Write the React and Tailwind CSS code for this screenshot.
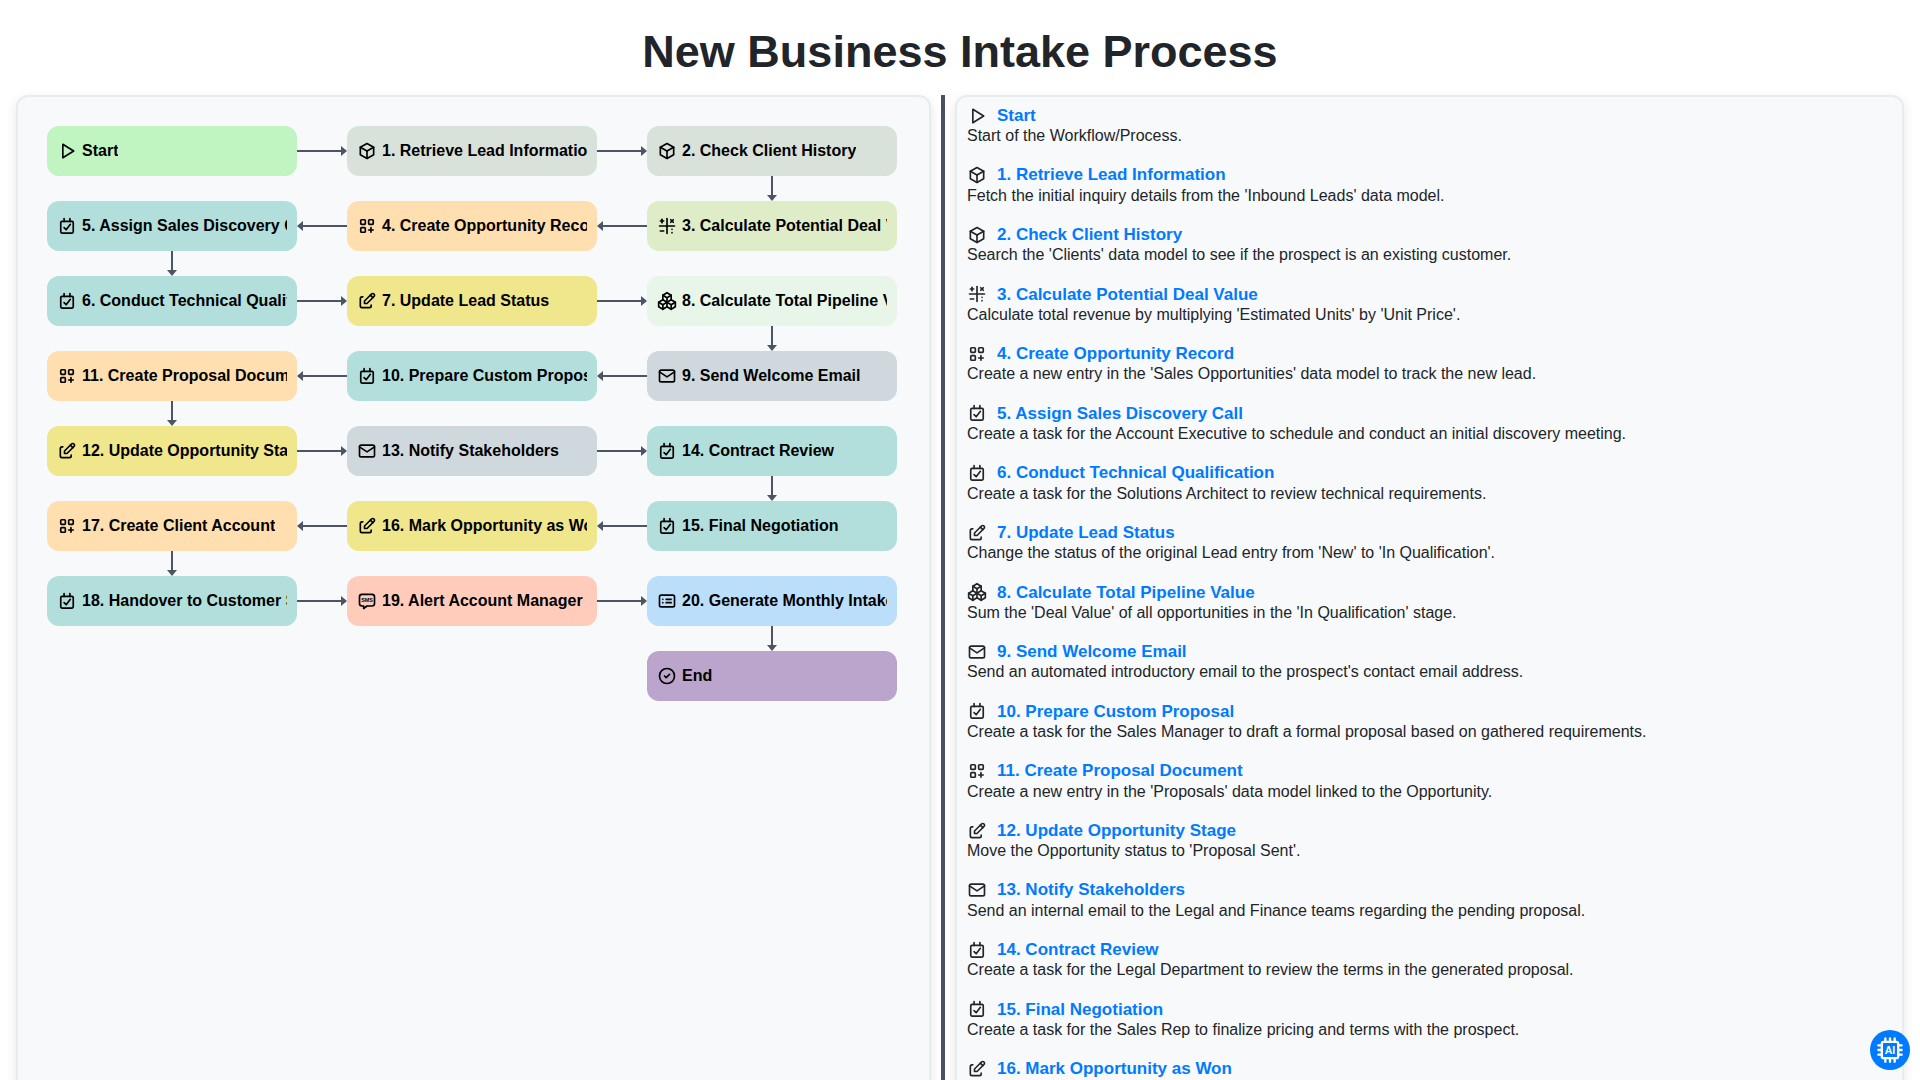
import {
  TbPlayerPlay,
  TbBox,
  TbMathSymbols,
  TbEdit,
  TbPackages,
  TbMail,
  TbCircleCheck,
} from "react-icons/tb";

const COLORS = {
  start: "bg-[#c0f5c2]",
  data: "bg-[#d9e2da]",
  math: "bg-[#dfecc8]",
  create: "bg-[#ffdeb0]",
  task: "bg-[#b2dfdb]",
  update: "bg-[#f0e68c]",
  agg: "bg-[#e8f5e9]",
  mail: "bg-[#cfd8dc]",
  sms: "bg-[#ffccbc]",
  report: "bg-[#bbdefb]",
  end: "bg-[#bca5cc]",
};

function TaskIcon({ className }) {
  return (
    <svg viewBox="0 0 24 24" fill="none" stroke="currentColor" strokeWidth="2" strokeLinecap="round" strokeLinejoin="round" className={className}>
      <rect x="4.5" y="6.5" width="15" height="14" rx="1.5" />
      <path d="M8.5 3v3.5M15.5 3v3.5M8.5 14l2.5 2.5 5-6.5" />
    </svg>
  );
}

function AppsIcon({ className }) {
  return (
    <svg viewBox="0 0 24 24" fill="none" stroke="currentColor" strokeWidth="2" strokeLinecap="round" strokeLinejoin="round" className={className}>
      <rect x="4.5" y="4.5" width="5.5" height="5.5" rx="1" />
      <rect x="14" y="4.5" width="5.5" height="5.5" rx="1" />
      <rect x="4.5" y="14" width="5.5" height="5.5" rx="1" />
      <path d="M14 16.75h5.5M16.75 14v5.5" />
    </svg>
  );
}

function SmsIcon({ className }) {
  return (
    <svg viewBox="0 0 24 24" fill="none" stroke="currentColor" strokeWidth="2" strokeLinecap="round" strokeLinejoin="round" className={className}>
      <path d="M18 4a3 3 0 0 1 3 3v8a3 3 0 0 1-3 3h-6l-4 3v-3H6a3 3 0 0 1-3-3V7a3 3 0 0 1 3-3h12z" />
      <text x="12" y="13.5" textAnchor="middle" fontSize="6.5" fontWeight="700" fill="currentColor" stroke="none" fontFamily="Liberation Sans">SMS</text>
    </svg>
  );
}

function ReportIcon({ className }) {
  return (
    <svg viewBox="0 0 24 24" fill="none" stroke="currentColor" strokeWidth="2" strokeLinecap="round" strokeLinejoin="round" className={className}>
      <rect x="3" y="5" width="18" height="14" rx="2" />
      <path d="M7 10h.01M11 10h6M7 14h.01M11 14h6" />
    </svg>
  );
}

const STEPS = [
  { label: "Start", desc: "Start of the Workflow/Process.", icon: TbPlayerPlay, color: "start" },
  { label: "1. Retrieve Lead Information", desc: "Fetch the initial inquiry details from the 'Inbound Leads' data model.", icon: TbBox, color: "data" },
  { label: "2. Check Client History", desc: "Search the 'Clients' data model to see if the prospect is an existing customer.", icon: TbBox, color: "data" },
  { label: "3. Calculate Potential Deal Value", desc: "Calculate total revenue by multiplying 'Estimated Units' by 'Unit Price'.", icon: TbMathSymbols, color: "math" },
  { label: "4. Create Opportunity Record", desc: "Create a new entry in the 'Sales Opportunities' data model to track the new lead.", icon: AppsIcon, color: "create" },
  { label: "5. Assign Sales Discovery Call", desc: "Create a task for the Account Executive to schedule and conduct an initial discovery meeting.", icon: TaskIcon, color: "task" },
  { label: "6. Conduct Technical Qualification", desc: "Create a task for the Solutions Architect to review technical requirements.", icon: TaskIcon, color: "task" },
  { label: "7. Update Lead Status", desc: "Change the status of the original Lead entry from 'New' to 'In Qualification'.", icon: TbEdit, color: "update" },
  { label: "8. Calculate Total Pipeline Value", desc: "Sum the 'Deal Value' of all opportunities in the 'In Qualification' stage.", icon: TbPackages, color: "agg" },
  { label: "9. Send Welcome Email", desc: "Send an automated introductory email to the prospect's contact email address.", icon: TbMail, color: "mail" },
  { label: "10. Prepare Custom Proposal", desc: "Create a task for the Sales Manager to draft a formal proposal based on gathered requirements.", icon: TaskIcon, color: "task" },
  { label: "11. Create Proposal Document", desc: "Create a new entry in the 'Proposals' data model linked to the Opportunity.", icon: AppsIcon, color: "create" },
  { label: "12. Update Opportunity Stage", desc: "Move the Opportunity status to 'Proposal Sent'.", icon: TbEdit, color: "update" },
  { label: "13. Notify Stakeholders", desc: "Send an internal email to the Legal and Finance teams regarding the pending proposal.", icon: TbMail, color: "mail" },
  { label: "14. Contract Review", desc: "Create a task for the Legal Department to review the terms in the generated proposal.", icon: TaskIcon, color: "task" },
  { label: "15. Final Negotiation", desc: "Create a task for the Sales Rep to finalize pricing and terms with the prospect.", icon: TaskIcon, color: "task" },
  { label: "16. Mark Opportunity as Won", desc: "Update the Opportunity stage to 'Closed Won'.", icon: TbEdit, color: "update" },
  { label: "17. Create Client Account", icon: AppsIcon, color: "create" },
  { label: "18. Handover to Customer Success", icon: TaskIcon, color: "task" },
  { label: "19. Alert Account Manager", icon: SmsIcon, color: "sms" },
  { label: "20. Generate Monthly Intake Report", icon: ReportIcon, color: "report" },
  { label: "End", icon: TbCircleCheck, color: "end" },
];

// snake layout: step index per column, odd rows run right to left
const ROWS = [
  [0, 1, 2],
  [5, 4, 3],
  [6, 7, 8],
  [11, 10, 9],
  [12, 13, 14],
  [17, 16, 15],
  [18, 19, 20],
  [null, null, 21],
];

function ArrowH({ left }) {
  return (
    <div className={`w-[50px] h-[50px] flex items-center ${left ? "flex-row-reverse" : ""}`}>
      <div className="flex-1 h-0.5 bg-[#4b5563]" />
      <div className={`w-0 h-0 border-y-[5px] border-y-transparent ${left ? "border-r-[6px] border-r-[#4b5563]" : "border-l-[6px] border-l-[#4b5563]"}`} />
    </div>
  );
}

function ArrowV() {
  return (
    <div className="w-[250px] h-[25px] flex flex-col items-center">
      <div className="flex-1 w-0.5 bg-[#4b5563]" />
      <div className="w-0 h-0 border-x-[5px] border-x-transparent border-t-[6px] border-t-[#4b5563]" />
    </div>
  );
}

function Node({ step }) {
  const Icon = step.icon;
  return (
    <div className={`w-[250px] h-[50px] shrink-0 rounded-xl px-2.5 flex items-center gap-[5px] ${COLORS[step.color]}`}>
      <Icon className="w-5 h-5 shrink-0 text-black" />
      <span className="overflow-hidden whitespace-nowrap text-base font-bold text-black leading-none py-1">{step.label}</span>
    </div>
  );
}

function Slot({ step }) {
  if (step === null) return <div className="w-[250px] h-[50px] shrink-0" />;
  return <Node step={STEPS[step]} />;
}

function Flow() {
  return (
    <div className="flex flex-col">
      {ROWS.map((row, i) => {
        const isLeft = i % 2 === 1;
        const hasHoriz = row[0] !== null;
        return (
          <div key={i} className="flex flex-col">
            <div className="flex">
              <Slot step={row[0]} />
              {hasHoriz ? <ArrowH left={isLeft} /> : <div className="w-[50px]" />}
              <Slot step={row[1]} />
              {hasHoriz ? <ArrowH left={isLeft} /> : <div className="w-[50px]" />}
              <Slot step={row[2]} />
            </div>
            {i < ROWS.length - 1 && (
              <div className={`flex w-[850px] ${isLeft ? "" : "justify-end"}`}>
                <ArrowV />
              </div>
            )}
          </div>
        );
      })}
    </div>
  );
}

export default function App() {
  return (
    <div className="h-[1080px] overflow-hidden bg-white flex flex-col font-['Liberation_Sans',Arial,sans-serif]">
      <h1 className="text-center text-[45px] leading-[55px] font-bold text-[#212529] pt-6 mb-[16px]">New Business Intake Process</h1>
      <div className="flex-1 min-h-0 flex px-4">
        <div className="w-[915px] shrink-0 bg-[#f8f9fa] border-2 border-[#e9ecef] rounded-xl p-[29px] shadow-[0_4px_12px_rgba(0,0,0,0.1)] overflow-hidden h-[1200px]">
          <Flow />
        </div>
        <div className="w-1 shrink-0 bg-[#4a5064] mx-[10px] h-[1200px]" />
        <div className="flex-1 bg-[#f8f9fa] border-2 border-[#e9ecef] rounded-xl shadow-[0_4px_12px_rgba(0,0,0,0.1)] pl-[10px] pt-[8.5px] h-[1200px] overflow-hidden">
          {STEPS.slice(0, 17).map((s) => {
            const Icon = s.icon;
            return (
              <div key={s.label} className="mb-[19.1px]">
                <div className="flex items-center gap-2.5 h-5">
                  <Icon className="w-5 h-5 shrink-0 text-[#212529]" />
                  <span className="text-[17px] font-bold text-[#007bff]">{s.label}</span>
                </div>
                <p className="text-base leading-5 mt-[0.5px] text-[#212529]">{s.desc}</p>
              </div>
            );
          })}
        </div>
      </div>
      <button className="fixed right-2.5 bottom-2.5 w-10 h-10 rounded-full bg-[#007bff] text-white flex items-center justify-center">
        <svg viewBox="0 0 24 24" fill="none" stroke="currentColor" strokeWidth="2" strokeLinecap="round" className="w-7 h-7">
          <rect x="5" y="5" width="14" height="14" rx="1.5" />
          <path d="M8 2v3M12 2v3M16 2v3M8 19v3M12 19v3M16 19v3M2 8h3M2 12h3M2 16h3M19 8h3M19 12h3M19 16h3" />
          <text x="12" y="15.3" textAnchor="middle" fontSize="9" fontWeight="700" fill="currentColor" stroke="none" fontFamily="Liberation Sans">AI</text>
        </svg>
      </button>
    </div>
  );
}
